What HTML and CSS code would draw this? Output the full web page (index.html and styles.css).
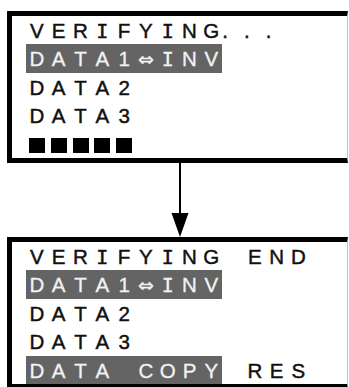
FILE: index.html
```html
<!DOCTYPE html>
<html>
<head>
<meta charset="utf-8">
<link rel="stylesheet" href="styles.css">
</head>
<body>
<div class="page">
  <div class="lcd">
    <div class="row"><span class="c">V</span><span class="c">E</span><span class="c">R</span><span class="c i">I</span><span class="c">F</span><span class="c">Y</span><span class="c i">I</span><span class="c">N</span><span class="c">G</span><span class="c dot">.</span><span class="c dot">.</span><span class="c dot">.</span></div>
    <div class="row"><span class="hl"><span class="c">D</span><span class="c">A</span><span class="c">T</span><span class="c">A</span><span class="c">1</span><span class="c arr">⇔</span><span class="c i">I</span><span class="c">N</span><span class="c">V</span></span></div>
    <div class="row"><span class="c">D</span><span class="c">A</span><span class="c">T</span><span class="c">A</span><span class="c">2</span></div>
    <div class="row"><span class="c">D</span><span class="c">A</span><span class="c">T</span><span class="c">A</span><span class="c">3</span></div>
    <div class="row"><span class="c"><span class="blk"></span></span><span class="c"><span class="blk"></span></span><span class="c"><span class="blk"></span></span><span class="c"><span class="blk"></span></span><span class="c"><span class="blk"></span></span></div>
  </div>
  <div class="arrow">
    <svg width="20" height="74" viewBox="0 0 20 74">
      <rect x="9" y="0" width="2" height="52" fill="#000"/>
      <polygon points="1.5,50 18.5,50 10,74" fill="#000"/>
    </svg>
  </div>
  <div class="lcd">
    <div class="row"><span class="c">V</span><span class="c">E</span><span class="c">R</span><span class="c i">I</span><span class="c">F</span><span class="c">Y</span><span class="c i">I</span><span class="c">N</span><span class="c">G</span><span class="c"> </span><span class="c">E</span><span class="c">N</span><span class="c">D</span></div>
    <div class="row"><span class="hl"><span class="c">D</span><span class="c">A</span><span class="c">T</span><span class="c">A</span><span class="c">1</span><span class="c arr">⇔</span><span class="c i">I</span><span class="c">N</span><span class="c">V</span></span></div>
    <div class="row"><span class="c">D</span><span class="c">A</span><span class="c">T</span><span class="c">A</span><span class="c">2</span></div>
    <div class="row"><span class="c">D</span><span class="c">A</span><span class="c">T</span><span class="c">A</span><span class="c">3</span></div>
    <div class="row"><span class="hl"><span class="c">D</span><span class="c">A</span><span class="c">T</span><span class="c">A</span><span class="c"> </span><span class="c">C</span><span class="c">O</span><span class="c">P</span><span class="c">Y</span></span><span class="c"> </span><span class="c">R</span><span class="c">E</span><span class="c">S</span></div>
  </div>
</div>
</body>
</html>
```
FILE: styles.css
```css
html, body {
  margin: 0;
  padding: 0;
  background: #fff;
}
.page {
  padding: 11px 0 0 7px;
  width: 342px;
  font-family: "Liberation Sans", Arial, sans-serif;
  font-size: 20.5px;
  color: #111;
}
.lcd {
  border-top: 5px solid #000;
  border-left: 5px solid #000;
  border-bottom: 5px solid #000;
  border-right: 1px solid #c4c4c4;
  padding-left: 14px;
  box-sizing: content-box;
  width: 321px;
}
.row {
  height: 28.4px;
  display: flex;
  align-items: stretch;
  white-space: pre;
}
.hl {
  display: flex;
  background: #646464;
  color: #f2f2f2;
}
.c {
  display: block;
  width: 21.8px;
  text-align: center;
  line-height: 26.4px;
  padding-top: 2px;
  flex: none;
  -webkit-text-stroke: 0.45px currentColor;
}
.hl .c {
  -webkit-text-stroke: 0.3px currentColor;
}
.c.i {
  font-family: "DejaVu Sans Mono", monospace;
  font-size: 20px;
}
.c.dot {
  text-align: left;
}
.c.arr {
  font-family: "DejaVu Sans", sans-serif;
  font-size: 19px;
  -webkit-text-stroke: 0.3px currentColor;
}
.blk {
  display: block;
  width: 16px;
  height: 15px;
  background: #000;
  margin: 6px 0 0 3px;
}
.arrow {
  height: 74px;
  padding-left: 163px;
}
.arrow svg {
  display: block;
}
```
